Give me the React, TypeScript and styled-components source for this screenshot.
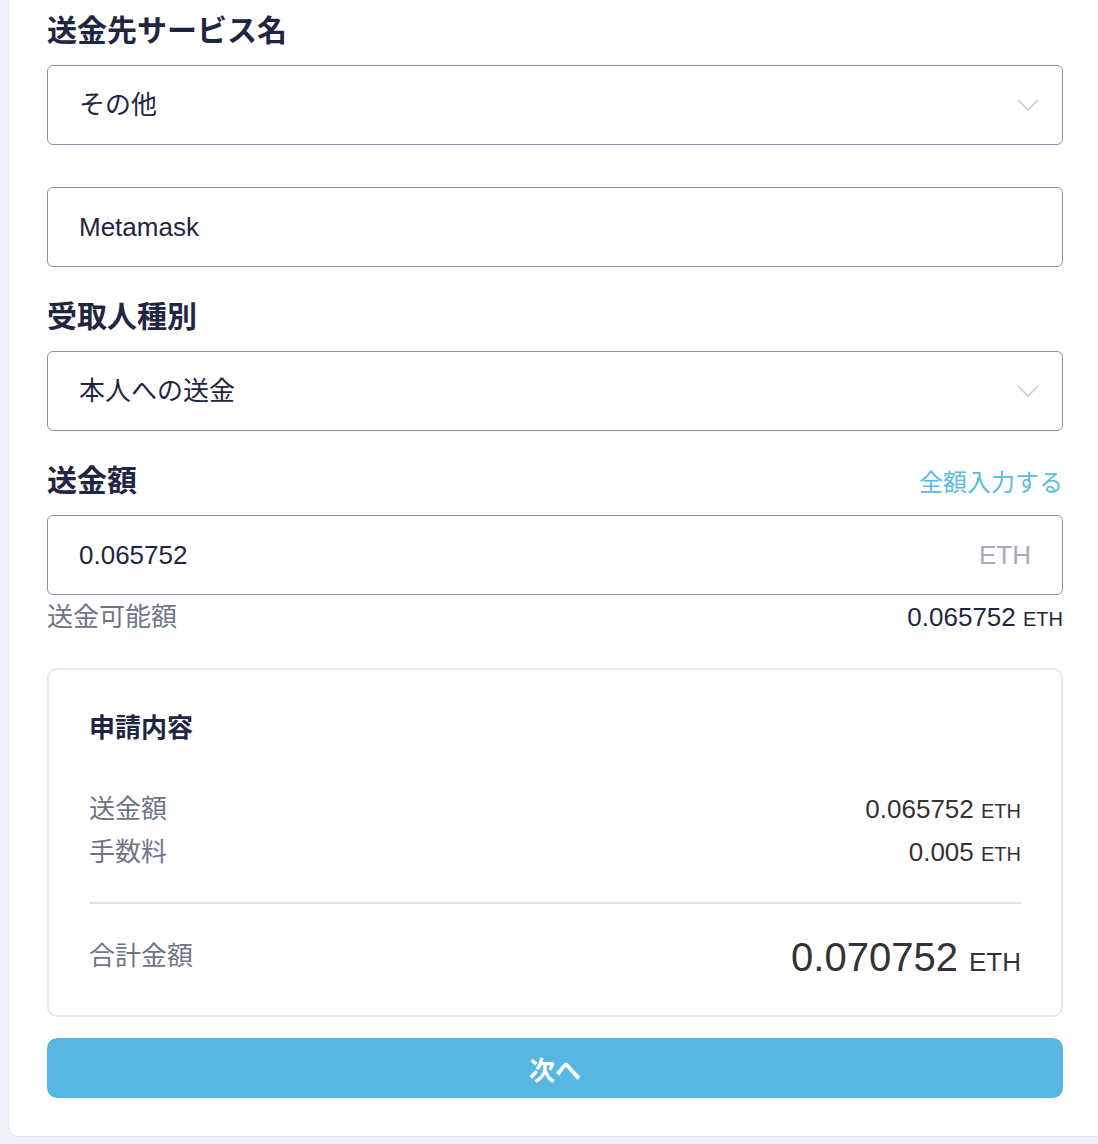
import React from "react";
import styled, { createGlobalStyle } from "styled-components";

const Global = createGlobalStyle`
  html, body { margin: 0; padding: 0; background: #eef1f6; }
  body { font-family: "Liberation Sans", "Noto Sans CJK JP", sans-serif; }
  * { box-sizing: border-box; }
`;

const Page = styled.div`
  padding: 0 0 7px 8px;
  background: #eef1f6;
  min-height: 1144px;
`;

const Card = styled.div`
  background: #fff;
  border-left: 1px solid #e4e7ed;
  border-bottom: 1px solid #e4e7ed;
  border-bottom-left-radius: 10px;
  padding: 13px 35px 38px 38px;
  display: flex;
  flex-direction: column;
`;

const LabelRow = styled.div<{ $top?: number }>`
  display: flex;
  justify-content: space-between;
  align-items: center;
  margin-top: ${(p) => p.$top ?? 0}px;
  margin-bottom: 16px;
  height: 36px;
`;

const Label = styled.div`
  font-size: 30px;
  font-weight: 700;
  color: #1f2641;
  line-height: 36px;
`;

const Link = styled.a`
  font-size: 24px;
  color: #5bbbe3;
  line-height: 36px;
  margin-top: 4px;
  text-decoration: none;
  cursor: pointer;
`;

const Field = styled.div<{ $top?: number }>`
  height: 80px;
  border: 1px solid #8b91ad;
  border-radius: 6px;
  display: flex;
  align-items: center;
  justify-content: space-between;
  padding: 0 23px 0 31px;
  margin-top: ${(p) => p.$top ?? 0}px;
`;

const FieldText = styled.span<{ $lift?: boolean }>`
  font-size: 26px;
  color: #1f2641;
  margin-bottom: ${(p) => (p.$lift ? 6 : 0)}px;
`;

const Unit = styled.span`
  font-size: 26px;
  color: #a8abb4;
  margin-right: 8px;
`;

const Chevron = () => (
  <svg width="22" height="12" viewBox="0 0 22 12" fill="none">
    <polyline points="1,1 11,11 21,1" stroke="#c5c8d1" strokeWidth="1.5" />
  </svg>
);

const AvailRow = styled.div`
  display: flex;
  justify-content: space-between;
  align-items: baseline;
  margin-top: 6px;
  height: 32px;
  line-height: 32px;
`;

const Muted = styled.span<{ $lift?: number }>`
  font-size: 26px;
  color: #6f7587;
  margin-bottom: ${(p) => p.$lift ?? 0}px;
`;

const Amount = styled.span<{ $color?: string; $size?: number }>`
  font-size: ${(p) => p.$size ?? 26}px;
  color: ${(p) => p.$color ?? "#1f2641"};
`;

const Small = styled.span<{ $size?: number }>`
  font-size: ${(p) => p.$size ?? 20}px;
`;

const Summary = styled.div`
  margin-top: 35px;
  border: 2px solid #e6e9ef;
  border-radius: 10px;
  padding: 42px 40px 32px 40px;
  display: flex;
  flex-direction: column;
`;

const SummaryTitle = styled.div`
  font-size: 26px;
  font-weight: 700;
  color: #1f2641;
  height: 32px;
  line-height: 32px;
  margin-bottom: 49px;
`;

const SummaryRow = styled.div<{ $top?: number }>`
  display: flex;
  justify-content: space-between;
  align-items: baseline;
  height: 32px;
  line-height: 32px;
  margin-top: ${(p) => p.$top ?? 0}px;
`;

const Divider = styled.div`
  height: 2px;
  background: #dfe2e8;
  margin: 34px 0 31px;
`;

const TotalRow = styled.div`
  display: flex;
  justify-content: space-between;
  align-items: center;
  height: 48px;
  line-height: 48px;
`;

const Button = styled.button`
  margin-top: 21px;
  height: 60px;
  border: none;
  border-radius: 10px;
  background: #57b7e0;
  color: #fff;
  font-family: "Liberation Sans", "Noto Sans CJK JP", sans-serif;
  font-size: 26px;
  font-weight: 700;
  cursor: pointer;
`;

export default function App() {
  return (
    <>
      <Global />
      <Page>
        <Card>
          <LabelRow>
            <Label>送金先サービス名</Label>
          </LabelRow>
          <Field>
            <FieldText $lift>その他</FieldText>
            <Chevron />
          </Field>
          <Field $top={42}>
            <FieldText>Metamask</FieldText>
          </Field>
          <LabelRow $top={32}>
            <Label>受取人種別</Label>
          </LabelRow>
          <Field>
            <FieldText $lift>本人への送金</FieldText>
            <Chevron />
          </Field>
          <LabelRow $top={32}>
            <Label>送金額</Label>
            <Link>全額入力する</Link>
          </LabelRow>
          <Field>
            <FieldText>0.065752</FieldText>
            <Unit>ETH</Unit>
          </Field>
          <AvailRow>
            <Muted>送金可能額</Muted>
            <Amount>
              0.065752 <Small>ETH</Small>
            </Amount>
          </AvailRow>
          <Summary>
            <SummaryTitle>申請内容</SummaryTitle>
            <SummaryRow>
              <Muted>送金額</Muted>
              <Amount $color="#333">
                0.065752 <Small>ETH</Small>
              </Amount>
            </SummaryRow>
            <SummaryRow $top={11}>
              <Muted>手数料</Muted>
              <Amount $color="#333">
                0.005 <Small>ETH</Small>
              </Amount>
            </SummaryRow>
            <Divider />
            <TotalRow>
              <Muted $lift={6}>合計金額</Muted>
              <Amount $color="#333" $size={40}>
                0.070752 <Small $size={26}>ETH</Small>
              </Amount>
            </TotalRow>
          </Summary>
          <Button>次へ</Button>
        </Card>
      </Page>
    </>
  );
}
